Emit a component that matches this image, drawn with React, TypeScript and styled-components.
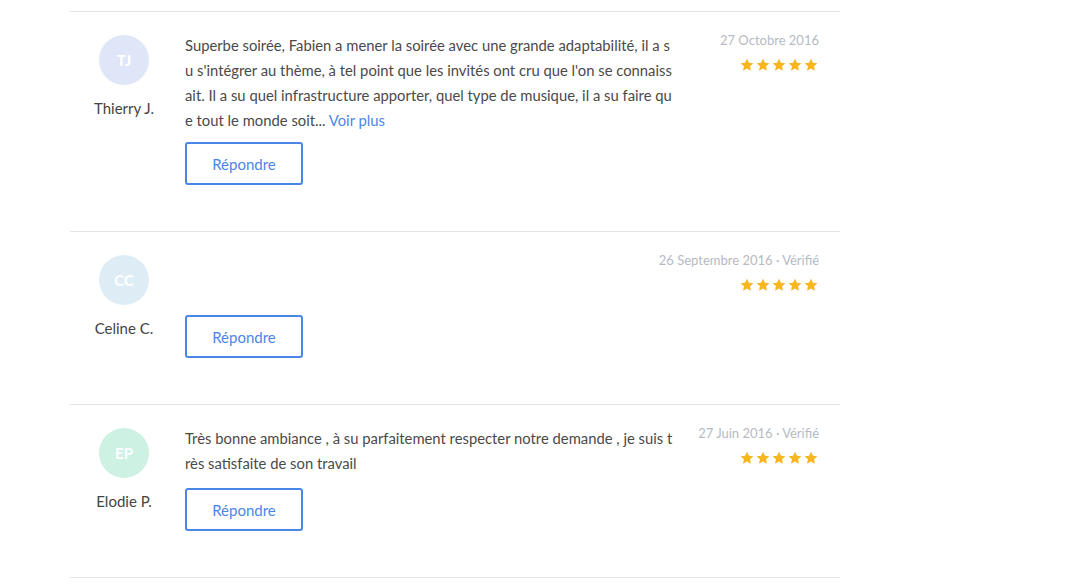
import React from 'react';
import styled, { createGlobalStyle } from 'styled-components';

const GlobalStyle = createGlobalStyle`
  html, body {
    margin: 0;
    padding: 0;
    background: #ffffff;
    font-family: Lato, "Open Sans", sans-serif;
  }
`;

const List = styled.section`
  width: 770px;
  margin-left: 70px;
  padding-top: 11px;
`;

const Review = styled.article`
  display: flex;
  border-top: 1px solid #e4e4e4;
  padding: 21px 21px 46px 0;

  &:last-child {
    border-bottom: 1px solid #e4e4e4;
  }
`;

const Author = styled.div`
  flex-shrink: 0;
  width: 108px;
  margin-right: 7px;
  padding-top: 2px;
  display: flex;
  flex-direction: column;
  align-items: center;
`;

const Avatar = styled.div<{ $bg: string }>`
  width: 50px;
  height: 50px;
  border-radius: 50%;
  background: ${(p) => p.$bg};
  color: #ffffff;
  font-weight: 700;
  font-size: 15px;
  display: flex;
  align-items: center;
  justify-content: center;
`;

const Name = styled.div`
  margin-top: 13px;
  font-size: 15px;
  line-height: 20px;
  color: #444444;
`;

const Body = styled.div`
  flex: 1;
  min-width: 0;
  display: flex;
  flex-direction: column;
  align-items: flex-start;
`;

const Top = styled.div`
  display: flex;
  width: 100%;
`;

const Text = styled.p`
  margin: 0;
  flex: 0 1 492px;
  min-width: 0;
  min-height: 53px;
  font-size: 14.8px;
  line-height: 25px;
  color: #4a4a4a;
  word-break: break-all;
`;

const More = styled.a`
  color: #4a86e8;
  text-decoration: none;
`;

const Meta = styled.div`
  flex: 1 0 auto;
  display: flex;
  flex-direction: column;
  align-items: flex-end;
`;

const Date = styled.div`
  font-size: 13px;
  line-height: 15px;
  color: #b6bac3;
  white-space: nowrap;
`;

const Stars = styled.div`
  display: flex;
  gap: 2px;
  margin-top: 10px;
  margin-right: 1px;
`;

const ReplyButton = styled.button`
  margin-top: 9px;
  width: 118px;
  height: 43px;
  border: 2px solid #4a86e8;
  border-radius: 3px;
  background: #ffffff;
  color: #4a86e8;
  font-family: inherit;
  font-size: 15px;
  cursor: pointer;
`;

const Star = () => (
  <svg width="14" height="14" viewBox="0 0 24 24">
    <path
      d="M12 1.2l3.3 7.1 7.7.8-5.8 5.2 1.7 7.6L12 18l-6.9 3.9 1.7-7.6L1 9.1l7.7-.8z"
      fill="#f6b61e"
    />
  </svg>
);

type Item = {
  initials: string;
  name: string;
  bg: string;
  date: string;
  text?: string;
  more?: boolean;
};

const reviews: Item[] = [
  {
    initials: 'TJ',
    name: 'Thierry J.',
    bg: '#dee6f8',
    date: '27 Octobre 2016',
    text:
      "Superbe soirée, Fabien a mener la soirée avec une grande adaptabilité, il a su s'intégrer au thème, à tel point que les invités ont cru que l'on se connaissait. Il a su quel infrastructure apporter, quel type de musique, il a su faire que tout le monde soit...",
    more: true,
  },
  {
    initials: 'CC',
    name: 'Celine C.',
    bg: '#deedf5',
    date: '26 Septembre 2016 · Vérifié',
  },
  {
    initials: 'EP',
    name: 'Elodie P.',
    bg: '#cdf1e3',
    date: '27 Juin 2016 · Vérifié',
    text:
      'Très bonne ambiance , à su parfaitement respecter notre demande , je suis très satisfaite de son travail',
  },
];

function App() {
  return (
    <>
      <GlobalStyle />
      <List>
        {reviews.map((r) => (
          <Review key={r.initials}>
            <Author>
              <Avatar $bg={r.bg}>{r.initials}</Avatar>
              <Name>{r.name}</Name>
            </Author>
            <Body>
              <Top>
                <Text>
                  {r.text}
                  {r.more && (
                    <>
                      {' '}
                      <More href="#">Voir plus</More>
                    </>
                  )}
                </Text>
                <Meta>
                  <Date>{r.date}</Date>
                  <Stars>
                    {[0, 1, 2, 3, 4].map((i) => (
                      <Star key={i} />
                    ))}
                  </Stars>
                </Meta>
              </Top>
              <ReplyButton>Répondre</ReplyButton>
            </Body>
          </Review>
        ))}
      </List>
    </>
  );
}

export default App;
